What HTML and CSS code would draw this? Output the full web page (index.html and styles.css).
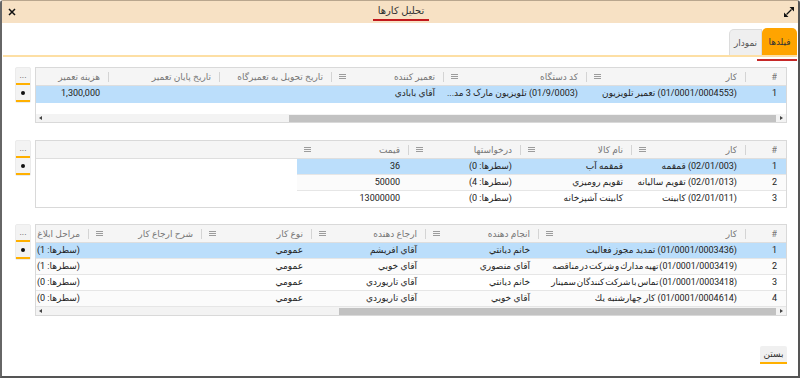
FILE: index.html
```html
<!DOCTYPE html>
<html lang="fa">
<head>
<meta charset="utf-8">
<title>تحلیل کارها</title>
<link rel="stylesheet" href="styles.css">
</head>
<body>
<div class="win">
  <div class="titlebar">
    <span class="close"><svg width="8" height="8" viewBox="0 0 8 8"><path d="M1 1L7 7M7 1L1 7" stroke="#111" stroke-width="1.5"/></svg></span>
    <div class="title"><span class="ttext">تحلیل کارها</span></div>
    <span class="expand"><svg width="10" height="10" viewBox="0 0 10 10"><path d="M2.5 7.5L7.5 2.5" stroke="#111" stroke-width="1.3"/><path d="M10 0L10 4.5L5.5 0Z M0 10L0 5.5L4.5 10Z" fill="#111"/></svg></span>
  </div>
  <div class="body" dir="rtl">
    <div class="tabs">
      <div class="tab active">فیلدها</div>
      <div class="tab">نمودار</div>
    </div>
    <div class="tabline"></div>
    <div class="tabmark"></div>

    <div class="content">
      <section class="gridwrap">
        <div class="grid g1">
          <div class="ghead"><div class="row">
            <div class="hc first"><span class="hl">#</span></div>
            <div class="hc"><span class="sep"></span><span class="hl">کار</span><span class="mi"></span></div>
            <div class="hc"><span class="sep"></span><span class="hl">کد دستگاه</span><span class="mi"></span></div>
            <div class="hc"><span class="sep"></span><span class="hl">تعمیر کننده</span><span class="mi"></span></div>
            <div class="hc"><span class="sep"></span><span class="hl">تاریخ تحویل به تعمیرگاه</span></div>
            <div class="hc"><span class="sep"></span><span class="hl">تاریخ پایان تعمیر</span></div>
            <div class="hc"><span class="sep"></span><span class="hl">هزینه تعمیر</span></div>
          </div></div>
          <div class="gbody b1">
            <div class="row sel">
              <div class="c">1</div>
              <div class="c">(01/0001/0004553) تعمیر تلویزیون</div>
              <div class="c">(01/9/0003) تلویزیون مارک 3 مد...</div>
              <div class="c">آقاي بابادي</div>
              <div class="c"></div>
              <div class="c"></div>
              <div class="c">1,300,000</div>
            </div>
          </div>
          <div class="hscroll">
            <span class="arr"><svg width="10" height="8" viewBox="0 0 10 8"><path d="M3 4L6 2L6 6Z" fill="#444"/></svg></span>
            <div class="track"><div class="thumb" style="width:487px"></div></div>
            <span class="arr"><svg width="10" height="8" viewBox="0 0 10 8"><path d="M7 4L4 2L4 6Z" fill="#444"/></svg></span>
          </div>
        </div>
        <div class="tools">
          <div class="tb tb1">...</div>
          <div class="tb tb2"><span class="dot"></span></div>
        </div>
      </section>

      <section class="gridwrap gw2">
        <div class="grid g2">
          <div class="ghead"><div class="row">
            <div class="hc first"><span class="hl">#</span></div>
            <div class="hc"><span class="sep"></span><span class="hl">کار</span><span class="mi"></span></div>
            <div class="hc"><span class="sep"></span><span class="hl">نام کالا</span><span class="mi"></span></div>
            <div class="hc"><span class="sep"></span><span class="hl">درخواستها</span><span class="mi"></span></div>
            <div class="hc"><span class="sep"></span><span class="hl">قیمت</span><span class="mi"></span></div>
          </div></div>
          <div class="gbody">
            <div class="row sel">
              <div class="c">1</div>
              <div class="c">(02/01/003) قمقمه</div>
              <div class="c">قمقمه آب</div>
              <div class="c">(سطرها: 0)</div>
              <div class="c">36</div>
            </div>
            <div class="row alt">
              <div class="c">2</div>
              <div class="c">(02/01/013) تقویم سالیانه</div>
              <div class="c">تقویم رومیزي</div>
              <div class="c">(سطرها: 4)</div>
              <div class="c">50000</div>
            </div>
            <div class="row last">
              <div class="c">3</div>
              <div class="c">(02/01/011) کابینت</div>
              <div class="c">کابینت آشپزخانه</div>
              <div class="c">(سطرها: 0)</div>
              <div class="c">13000000</div>
            </div>
          </div>
        </div>
        <div class="tools">
          <div class="tb tb1">...</div>
          <div class="tb tb2"><span class="dot"></span></div>
        </div>
      </section>

      <section class="gridwrap gw3">
        <div class="grid g3">
          <div class="ghead"><div class="row">
            <div class="hc first"><span class="hl">#</span></div>
            <div class="hc"><span class="sep"></span><span class="hl">کار</span><span class="mi"></span></div>
            <div class="hc"><span class="sep"></span><span class="hl">انجام دهنده</span><span class="mi"></span></div>
            <div class="hc"><span class="sep"></span><span class="hl">ارجاع دهنده</span><span class="mi"></span></div>
            <div class="hc"><span class="sep"></span><span class="hl">نوع کار</span><span class="mi"></span></div>
            <div class="hc"><span class="sep"></span><span class="hl">شرح ارجاع کار</span><span class="mi"></span></div>
            <div class="hc"><span class="sep"></span><span class="hl">مراحل ابلاغ و اجرا</span><span class="mi"></span></div>
          </div></div>
          <div class="gbody">
            <div class="row sel">
              <div class="c">1</div>
              <div class="c">(01/0001/0003436) تمدید مجوز فعالیت</div>
              <div class="c">خانم دیانتي</div>
              <div class="c">آقاي افریشم</div>
              <div class="c">عمومي</div>
              <div class="c"></div>
              <div class="c">(سطرها: 1)</div>
            </div>
            <div class="row alt">
              <div class="c">2</div>
              <div class="c tight">(01/0001/0003419) تهیه مدارك و شركت در مناقصه</div>
              <div class="c">آقاي منصوري</div>
              <div class="c">آقاي خوبي</div>
              <div class="c">عمومي</div>
              <div class="c"></div>
              <div class="c">(سطرها: 1)</div>
            </div>
            <div class="row">
              <div class="c">3</div>
              <div class="c tight">(01/0001/0003418) تماس با شركت كنندگان سمینار</div>
              <div class="c">خانم دیانتي</div>
              <div class="c">آقاي تاریوردي</div>
              <div class="c">عمومي</div>
              <div class="c"></div>
              <div class="c">(سطرها: 0)</div>
            </div>
            <div class="row alt">
              <div class="c">4</div>
              <div class="c">(01/0001/0004614) كار چهارشنبه يك</div>
              <div class="c">آقاي خوبي</div>
              <div class="c">آقاي تاریوردي</div>
              <div class="c">عمومي</div>
              <div class="c"></div>
              <div class="c">(سطرها: 0)</div>
            </div>
          </div>
          <div class="hscroll">
            <span class="arr"><svg width="10" height="8" viewBox="0 0 10 8"><path d="M3 4L6 2L6 6Z" fill="#444"/></svg></span>
            <div class="track"><div class="thumb" style="width:437px"></div></div>
            <span class="arr"><svg width="10" height="8" viewBox="0 0 10 8"><path d="M7 4L4 2L4 6Z" fill="#444"/></svg></span>
          </div>
        </div>
        <div class="tools">
          <div class="tb tb1">...</div>
          <div class="tb tb2"><span class="dot"></span></div>
        </div>
      </section>

      <div class="footer"><button class="btn">بستن</button></div>
    </div>
  </div>
</div>
</body>
</html>
```

FILE: styles.css
```css
* { box-sizing: border-box; margin: 0; padding: 0; }
html, body { width: 800px; height: 378px; overflow: hidden; background: #fff; }
body { font-family: Roboto, "DejaVu Sans", sans-serif; font-size: 9px; color: #222; }

.win {
  width: 800px; height: 378px;
  border-left: 2px solid #666; border-right: 2px solid #555; border-bottom: 2px solid #555;
  border-top: 1px solid #b9a68e;
  border-radius: 3px 3px 0 0;
  display: flex; flex-direction: column; overflow: hidden; background: #fff;
}

.titlebar {
  height: 22px; flex: none; background: #f7e1c4;
  display: flex; align-items: center; direction: ltr; padding: 0 4px 0 6px;
}
.close { width: 10px; display: flex; }
.title { flex: 1; display: flex; justify-content: center; padding-top: 1px; }
.ttext { font-size: 10px; line-height: 12px; color: #333; padding: 0 5px 2px; border-bottom: 2px solid #c2181c; }
.expand { display: flex; }

.body { flex: 1; display: flex; flex-direction: column; }

.tabs { height: 32px; padding-top: 5px; display: flex; align-items: flex-end; flex: none; }
.tab {
  height: 26px; width: 33px; display: flex; align-items: center; justify-content: center;
  background: #efefef; border: 1px solid #dcdcdc; border-bottom: none;
  border-top-left-radius: 5px; color: #555; font-size: 9px;
}
.tab.active { height: 27px; width: 35px; margin-right: 1px; background: #ffa400; border: none; border-radius: 5px 5px 0 0; color: #333; }
.tabline { height: 2px; margin: 0 1px; background: #fddfa4; flex: none; }
.tabmark { width: 40px; height: 2px; margin-top: 2px; margin-right: 1px; background: #c62828; flex: none; }

.content { padding: 6px 11px 0 13px; }

.gridwrap { display: flex; align-items: flex-start; gap: 4px; }
.gw2 { margin-top: 17px; }
.gw3 { margin-top: 16px; }

.grid { width: 752px; border: 1px solid #d9d9d9; overflow: hidden; background: #fff; }

.ghead { height: 18px; background: #f5f5f5; border-bottom: 1px solid #dedede; }
.ghead .row { height: 17px; }
.row { display: grid; width: max-content; }
.g1 .row { grid-template-columns: 40px 159px 143px 112px 112px 111px 113px; }
.g2 .row { grid-template-columns: 40px 114px 111px 112px 112px; }
.g3 .row { grid-template-columns: 40px 207px 113px 114px 110px 113px 113px; }

.hc { display: flex; align-items: center; padding-left: 7px; color: #777; overflow: hidden; white-space: nowrap; }
.hc.first { padding-right: 9px; }
.sep { width: 1px; height: 10px; background: #d4d4d4; margin-left: 8px; flex: none; }
.hl { flex: 1; overflow: hidden; white-space: nowrap; }
.mi {
  width: 7px; height: 5px; flex: none;
  border-top: 1px solid #9c9c9c; border-bottom: 1px solid #9c9c9c;
  background: linear-gradient(#9c9c9c, #9c9c9c) center / 100% 1px no-repeat;
}

.gbody .row { height: 16px; border-bottom: 1px solid #e6e6e6; }
.gbody .row.last { border-bottom: none; }
.b1 { height: 28px; }
.b1 .row { height: 17px; border-bottom: none; }
.row.sel { background: #bbdefb; }
.row.alt { background: #fbfbfb; }
.c {
  padding: 0 9px 0 2px; line-height: 15px;
  white-space: nowrap; overflow: hidden; text-overflow: ellipsis; color: #222;
}
.c.tight { font-size: 8.8px; word-spacing: -1.2px; padding-left: 0; }

.hscroll { height: 8px; display: flex; align-items: center; direction: ltr; background: #f3f3f3; }
.arr { width: 10px; height: 8px; display: flex; flex: none; }
.track { flex: 1; height: 7px; display: flex; justify-content: flex-end; }
.thumb { height: 7px; background: #c2c2c2; }

.tools { width: 16px; background: #f3f3f3; border: 1px solid #ebebeb; border-radius: 2px; flex: none; }
.tb { display: flex; justify-content: center; color: #555; }
.tb1 { height: 17px; line-height: 9px; padding-top: 3px; border-bottom: 2px solid #ffb000; font-size: 9px; }
.tb2 { height: 17px; align-items: center; border-bottom: 2px solid #ffb000; }
.dot { width: 4px; height: 4px; border-radius: 50%; background: #111; }

.footer { margin-top: 30px; display: flex; }
.btn {
  font-family: Roboto, "DejaVu Sans", sans-serif; font-size: 9px; color: #333;
  height: 18px; width: 27px; background: #f0f0f0; border: none; border-bottom: 2px solid #ffb000;
  border-radius: 2px 2px 0 0;
}
```
